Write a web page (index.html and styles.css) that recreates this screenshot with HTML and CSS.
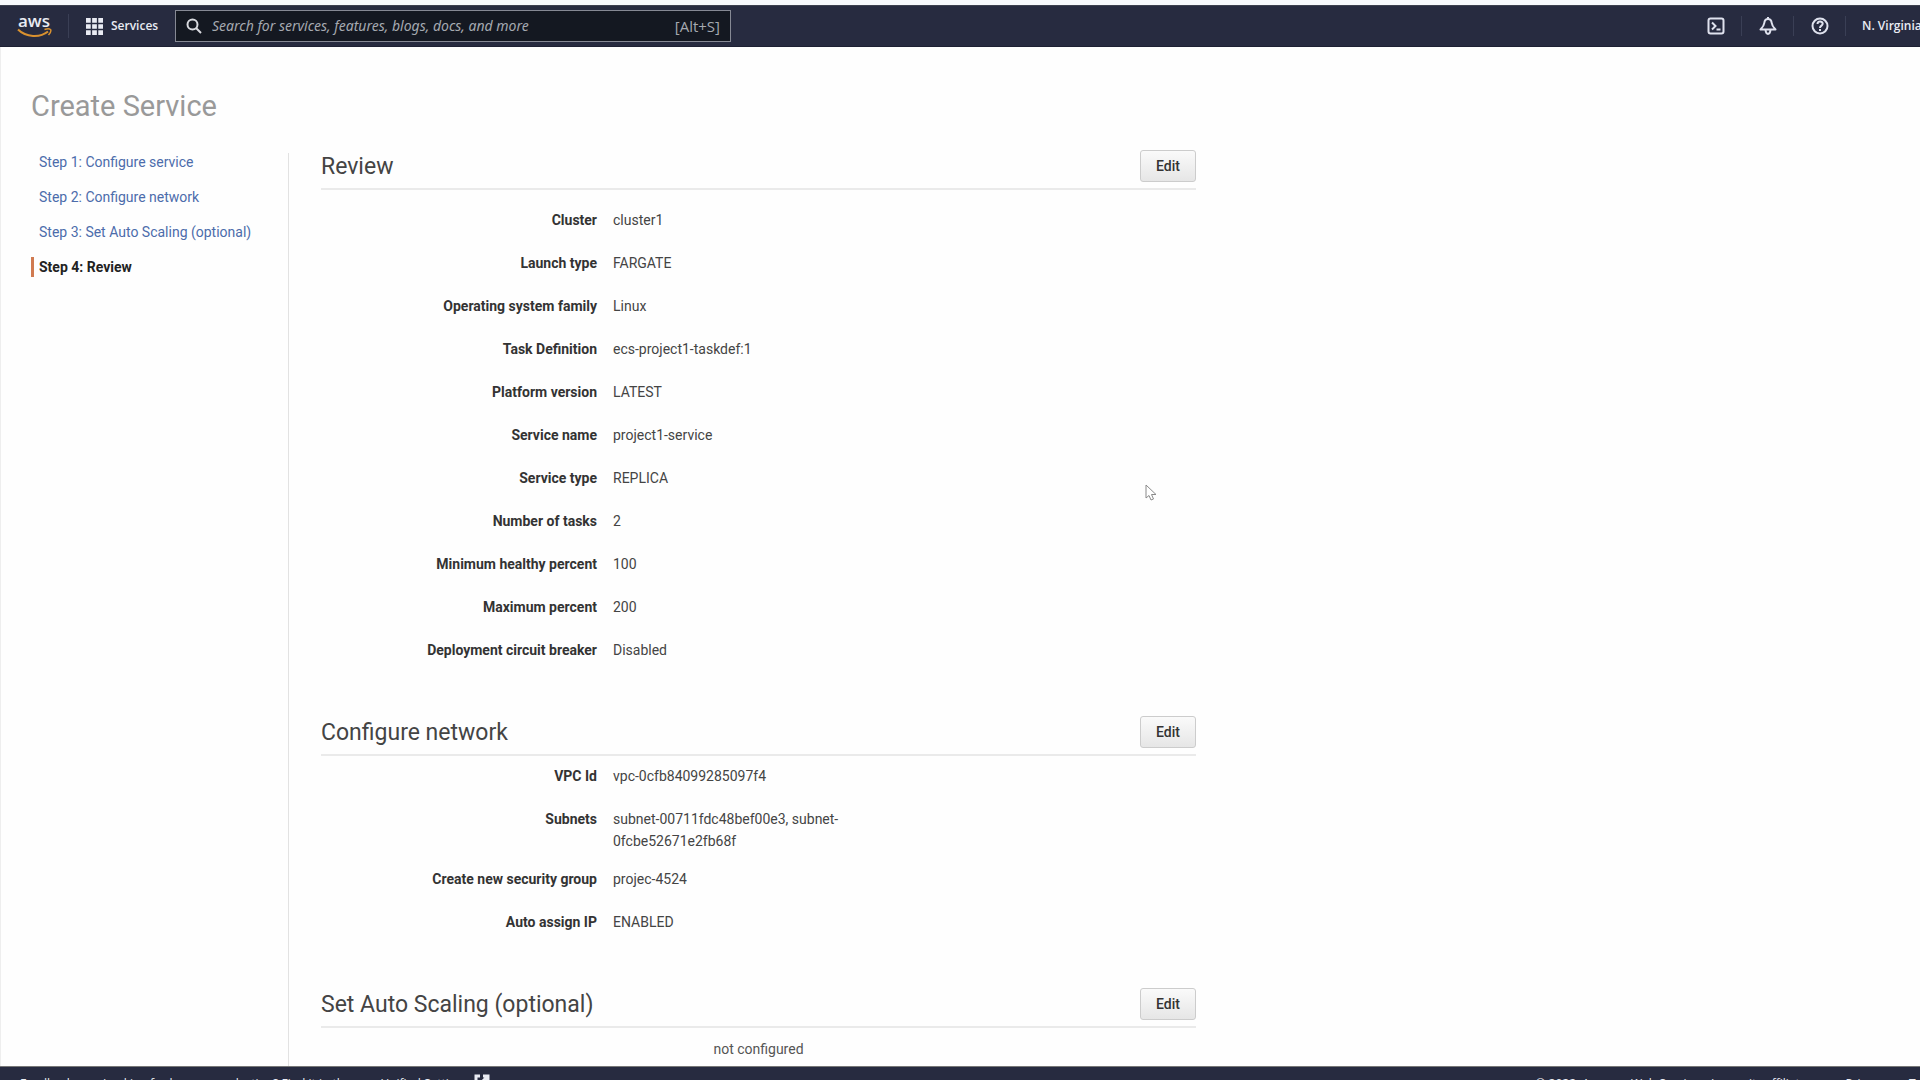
FILE: index.html
```
<!DOCTYPE html>
<html lang="en">
<head>
<meta charset="utf-8">
<title>Create Service</title>
<link rel="stylesheet" href="styles.css">
</head>
<body>
<header class="nav">
  <a class="logo" href="#" aria-label="AWS home">
    <span class="logo-text">aws</span>
    <svg class="logo-smile" viewBox="0 0 36 10" aria-hidden="true"><path d="M1 1.500C9 9.500 23 10 31 3.500" fill="none" stroke="#d9912f" stroke-width="2"/><path d="M27.500 1.500c2.500-.8 5-.8 6 0 .7 1-.2 3.500-2 5.500" fill="none" stroke="#d9912f" stroke-width="1.500"/></svg>
  </a>
  <button class="services" type="button">
    <svg class="grid-icon" viewBox="0 0 18 18" aria-hidden="true" fill="#e9ebf3"><path d="M0 0h5v5H0zM6.500 0h5v5h-5zM13 0h5v5h-5zM0 6.500h5v5H0zM6.500 6.500h5v5h-5zM13 6.500h5v5h-5zM0 13h5v5H0zM6.500 13h5v5h-5zM13 13h5v5h-5z"/></svg>
    <span>Services</span>
  </button>
  <div class="search">
    <svg class="search-icon" viewBox="0 0 16 16" aria-hidden="true" fill="none" stroke="#d8dadf" stroke-width="2"><circle cx="6.500" cy="6.500" r="5"/><path d="M10 10l5 5"/></svg>
    <input class="search-input" type="text" aria-label="Search" placeholder="Search for services, features, blogs, docs, and more">
    <span class="shortcut">[Alt+S]</span>
  </div>
  <div class="tools">
    <button class="tool" type="button" aria-label="CloudShell">
      <svg class="icon" viewBox="0 0 18 18" aria-hidden="true" fill="none" stroke="#dfe2ee" stroke-width="2"><rect x="1.500" y="1.500" width="15" height="15" rx="2"/><path d="M5 5.500L8.500 9 5 12.500M9.500 12.500h4"/></svg>
    </button>
    <button class="tool" type="button" aria-label="Notifications">
      <svg class="icon" viewBox="0 0 18 18" aria-hidden="true" fill="none" stroke="#dfe2ee" stroke-width="2" stroke-linejoin="round"><path d="M9 2C6.500 2 5.500 3.800 5.300 6 5 9 3.500 10.500 1.500 12.500h15c-2-2-3.500-3.500-3.800-6.500C12.500 3.800 11.500 2 9 2zM9 0v2M6.500 13c.3 2.500 1.200 4 2.500 4s2.200-1.500 2.500-4"/></svg>
    </button>
    <button class="tool" type="button" aria-label="Help">
      <svg class="icon" viewBox="0 0 18 18" aria-hidden="true" fill="none" stroke="#dfe2ee" stroke-width="2"><circle cx="9" cy="9" r="7.500"/><path d="M6.500 7c0-3.200 5.200-3.200 5.200-.2C11.700 8.700 9 8.500 9 11M9 12v2"/></svg>
    </button>
    <button class="region" type="button">N. Virginia</button>
  </div>
</header>
<main class="page">
  <h1 class="title">Create Service</h1>
  <div class="columns">
    <nav class="steps" aria-label="Steps">
      <a class="step" href="#">Step 1: Configure service</a>
      <a class="step" href="#">Step 2: Configure network</a>
      <a class="step" href="#">Step 3: Set Auto Scaling (optional)</a>
      <a class="step current" href="#" aria-current="step">Step 4: Review</a>
    </nav>
    <div class="content">
      <section class="section">
        <div class="head"><h2>Review</h2><button class="edit" type="button">Edit</button></div>
        <dl class="rows spaced">
          <dt>Cluster</dt><dd>cluster1</dd>
          <dt>Launch type</dt><dd>FARGATE</dd>
          <dt>Operating system family</dt><dd>Linux</dd>
          <dt>Task Definition</dt><dd>ecs-project1-taskdef:1</dd>
          <dt>Platform version</dt><dd>LATEST</dd>
          <dt>Service name</dt><dd>project1-service</dd>
          <dt>Service type</dt><dd>REPLICA</dd>
          <dt>Number of tasks</dt><dd>2</dd>
          <dt>Minimum healthy percent</dt><dd>100</dd>
          <dt>Maximum percent</dt><dd>200</dd>
          <dt>Deployment circuit breaker</dt><dd>Disabled</dd>
        </dl>
      </section>
      <section class="section">
        <div class="head"><h2>Configure network</h2><button class="edit" type="button">Edit</button></div>
        <dl class="rows">
          <dt>VPC Id</dt><dd>vpc-0cfb84099285097f4</dd>
          <dt>Subnets</dt><dd class="pair">subnet-00711fdc48bef00e3, subnet-0fcbe52671e2fb68f</dd>
          <dt>Create new security group</dt><dd>projec-4524</dd>
          <dt>Auto assign IP</dt><dd>ENABLED</dd>
        </dl>
      </section>
      <section class="section">
        <div class="head"><h2>Set Auto Scaling (optional)</h2><button class="edit" type="button">Edit</button></div>
        <p class="empty">not configured</p>
      </section>
    </div>
  </div>
</main>
<footer class="footer">
  <a href="#">Feedback</a>
  <span class="language">Looking for language selection? Find it in the new <a class="unified" href="#">Unified Settings</a></span>
  <svg class="external" viewBox="0 0 16 16" aria-hidden="true" fill="none" stroke="#e9ebf3" stroke-width="3"><path d="M6 2H2v12h12v-4M9 2h5v5M14 2L7 9"/></svg>
  <span class="legal">© 2022, Amazon Web Services, Inc. or its affiliates.</span>
  <a class="privacy" href="#">Privacy</a>
  <a class="terms" href="#">Terms</a>
</footer>
<svg class="cursor" viewBox="0 0 12 18" aria-hidden="true"><path d="M1 1v13l3-2.500 2 4.500 2.500-1-2-4.500H11z" fill="#fff" stroke="#8a8a8a"/></svg>
</body>
</html>
```
FILE: styles.css
```
* { box-sizing: border-box; }
html { height: 100%; }
body {
  margin: 0;
  height: 100vh;
  display: flex;
  flex-direction: column;
  overflow: hidden;
  border-top: 5px solid #f7f9fd;
  background: #fefefe;
  color: #444;
  font: 14px/22px Roboto, sans-serif;
}
button { font: inherit; color: inherit; background: none; border: 0; padding: 0; }
a { color: inherit; text-decoration: none; }

.nav {
  flex: none;
  display: flex;
  align-items: center;
  height: 42px;
  padding-left: 17px;
  background: #272b40;
  border-top: 1px solid #3c404f;
  border-bottom: 1px solid #1d2033;
  color: #e9ebf3;
  font: 12px/20px "Open Sans", sans-serif;
}
.logo { display: flex; flex-direction: column; width: 52px; height: 24px; border-right: 1px solid #3a3f55; }
.logo-text { font: 600 17px/14px "Open Sans", sans-serif; padding-left: 1px; }
.logo-smile { width: 36px; height: 10px; }
.services { display: flex; align-items: center; gap: 8px; width: 72px; margin-left: 17px; font-weight: 600; }
.grid-icon { width: 17px; height: 17px; flex: none; }
.search {
  display: flex;
  align-items: center;
  width: 556px;
  height: 32px;
  margin-left: 17px;
  padding: 0 10px;
  border: 1px solid #868994;
  background: #141821;
  color: #a5a9b0;
  font-size: 15px;
}
.search-icon { width: 16px; height: 16px; flex: none; }
.search-input { flex: 1; min-width: 0; margin-left: 9px; padding: 0 0 0 1px; border: 0; background: none; font: italic 14px/20px "Noto Sans", sans-serif; color: inherit; }
.search-input::placeholder { color: #a5a9b0; opacity: 1; }
.tools { display: flex; align-items: center; margin-left: auto; }
.tool { display: flex; justify-content: center; width: 52px; height: 20px; align-items: center; border-right: 1px solid #3a3f55; }
.icon { width: 18px; height: 18px; }
.region { width: 74px; padding-left: 16px; white-space: nowrap; text-align: left; font-weight: 600; }

.page { flex: 1; min-height: 0; display: flex; flex-direction: column; padding: 42px 30px 0; border-left: 1px solid #eee; }
.title { margin: 0; font-weight: 400; font-size: 29px; line-height: 34px; color: #999; }
.columns { flex: 1; min-height: 0; display: flex; margin-top: 27px; }
.steps { flex: none; display: flex; flex-direction: column; gap: 15px; width: 258px; margin-top: 3px; border-right: 1px solid #e2e2e2; }
.step { line-height: 20px; padding-left: 5px; border-left: 3px solid transparent; color: #4c6cab; }
.step:first-child { margin-top: -1px; }
.current { border-left-color: #d07a50; color: #222; font-weight: 700; }
.content { width: 875px; margin-left: 32px; }
.section { margin-bottom: 55px; }
.head { display: flex; align-items: center; justify-content: space-between; height: 40px; padding-bottom: 6px; border-bottom: 2px solid #eaeaea; }
h2 { margin: 0; padding-top: 2px; font-weight: 400; font-size: 23px; line-height: 30px; color: #444; }
.edit { width: 56px; height: 32px; border: 1px solid #ccc; border-radius: 3px; background: linear-gradient(#fafafa, #e6e6e6); color: #333; font-weight: 500; }
.rows { display: grid; grid-template-columns: 276px 240px; column-gap: 16px; row-gap: 21px; margin: 0; padding-top: 9px; }
.spaced { padding-top: 19px; }
dt { text-align: right; font-weight: 700; color: #333; }
dd { margin: 0; }
.pair { margin-bottom: -5px; }
.empty { margin: 0; padding-top: 10px; text-align: center; color: #555; }

.footer {
  flex: none;
  display: flex;
  height: 14px;
  padding: 7px 0 0 20px;
  overflow: hidden;
  background: #272b40;
  border-top: 1px solid #777;
  color: #e9ebf3;
  font: 12px/20px "Open Sans", sans-serif;
}
.language { margin-left: 30px; }
.external { width: 16px; height: 16px; margin-left: 6px; }
.legal { margin-left: auto; }
.privacy { margin: 0 24px 0 30px; }
.terms { width: 11px; }
.cursor { position: absolute; left: 1145px; top: 484px; width: 12px; height: 18px; }
```
